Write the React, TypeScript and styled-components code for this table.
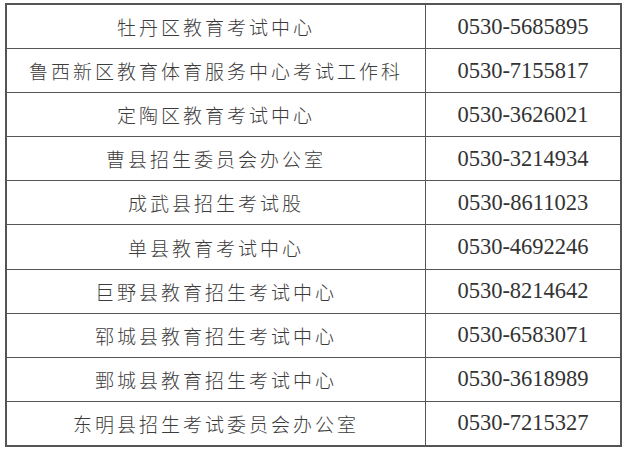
import styled, { createGlobalStyle } from "styled-components";

interface Office {
  name: string;
  phone: string;
}

const offices: Office[] = [
  { name: "牡丹区教育考试中心", phone: "0530-5685895" },
  { name: "鲁西新区教育体育服务中心考试工作科", phone: "0530-7155817" },
  { name: "定陶区教育考试中心", phone: "0530-3626021" },
  { name: "曹县招生委员会办公室", phone: "0530-3214934" },
  { name: "成武县招生考试股", phone: "0530-8611023" },
  { name: "单县教育考试中心", phone: "0530-4692246" },
  { name: "巨野县教育招生考试中心", phone: "0530-8214642" },
  { name: "郓城县教育招生考试中心", phone: "0530-6583071" },
  { name: "鄄城县教育招生考试中心", phone: "0530-3618989" },
  { name: "东明县招生考试委员会办公室", phone: "0530-7215327" },
];

function App() {
  return (
    <>
      <GlobalStyle />
      <Page>
        <Table>
          {offices.map((o) => (
            <Row key={o.phone}>
              <NameCell>{o.name}</NameCell>
              <PhoneCell>{o.phone}</PhoneCell>
            </Row>
          ))}
        </Table>
      </Page>
    </>
  );
}

const GlobalStyle = createGlobalStyle`
  html, body {
    margin: 0;
    padding: 0;
    background: #ffffff;
  }
`;

const Page = styled.div`
  width: 627px;
  height: 452px;
  padding: 3px 0 0 5px;
  box-sizing: border-box;
  background: #ffffff;
`;

const Table = styled.div`
  width: 617px;
  height: 444px;
  box-sizing: border-box;
  border: 2px solid #555;
  background: #555;
  display: grid;
  grid-template-rows: repeat(10, 1fr);
  row-gap: 1px;
`;

const Row = styled.div`
  display: grid;
  grid-template-columns: 418px 1fr;
  column-gap: 1px;
`;

const Cell = styled.div`
  background: #fff;
  display: flex;
  align-items: center;
  justify-content: center;
  white-space: nowrap;
`;

const NameCell = styled(Cell)`
  font-family: "Noto Sans CJK SC", "Liberation Serif", serif;
  font-size: 19px;
  letter-spacing: 3px;
  color: #3c3c3c;
  font-weight: 300;
`;

const PhoneCell = styled(Cell)`
  font-family: "Liberation Serif", serif;
  font-size: 22.5px;
  color: #333;
`;

export default App;
